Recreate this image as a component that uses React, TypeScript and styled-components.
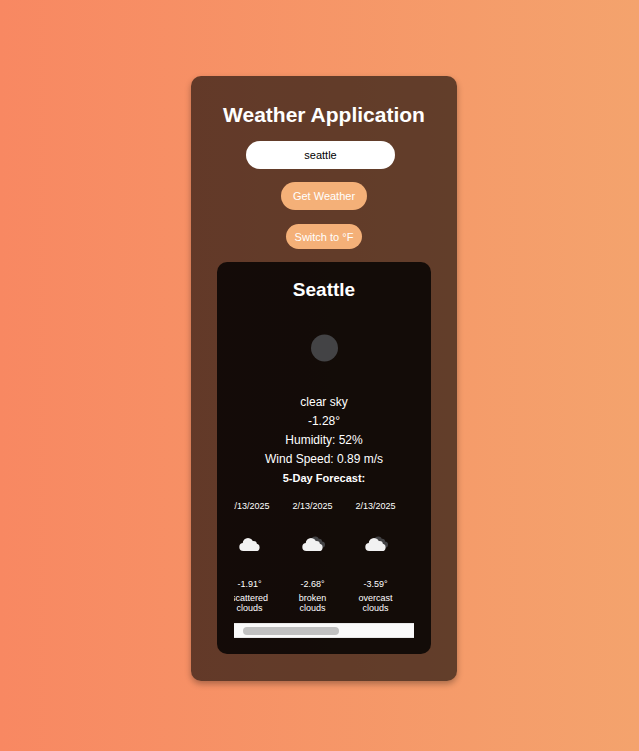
import React, { useLayoutEffect, useRef, useState } from "react";
import styled, { createGlobalStyle } from "styled-components";

const GlobalStyle = createGlobalStyle`
  *, *::before, *::after { box-sizing: border-box; }
  body {
    margin: 0;
    font-family: "Liberation Sans", Arial, sans-serif;
    color: #fff;
    background: linear-gradient(to right, #f88862, #f4a36d);
  }
`;

const Page = styled.main`
  min-height: 100vh;
  display: flex;
  align-items: center;
  justify-content: center;
  padding: 6px 0 0 9px;
`;

const Card = styled.section`
  display: flex;
  flex-direction: column;
  align-items: center;
  width: 100%;
  max-width: 266px;
  padding: 26px 26px 27px;
  border-radius: 10px;
  background: rgba(0, 0, 0, 0.6);
  box-shadow: 0 3px 6px rgba(0, 0, 0, 0.3);
`;

const Title = styled.h1`
  margin: 0 0 13px;
  font-size: 21px;
  line-height: 26px;
  white-space: nowrap;
`;

const SearchForm = styled.form`
  display: flex;
  flex-direction: column;
  align-items: center;
  gap: 13px;
  margin-bottom: 14px;
`;

const CityInput = styled.input`
  width: 149px;
  height: 28px;
  margin-right: 7px;
  padding: 0 13px;
  border: 0;
  border-radius: 14px;
  background: #fff;
  color: #000;
  font: 11px "Liberation Sans", Arial, sans-serif;
  text-align: center;
`;

const PillButton = styled.button<{ $small?: boolean }>`
  height: ${(p) => (p.$small ? 25 : 28)}px;
  padding: 0 ${(p) => (p.$small ? 9 : 12)}px;
  border: 0;
  border-radius: 14px;
  background: #f4b078;
  color: #fff;
  font: 11px "Liberation Sans", Arial, sans-serif;
  cursor: pointer;
`;

const Report = styled.article`
  align-self: stretch;
  margin-top: 13px;
  padding: 17px 17px 16px;
  border-radius: 10px;
  background: rgba(0, 0, 0, 0.8);
  text-align: center;
`;

const City = styled.h2`
  margin: 0;
  font-size: 19px;
  line-height: 22px;
`;

const CurrentIcon = styled.svg`
  display: block;
  width: 86px;
  height: 86px;
  margin: 5px auto 3px;
`;

const Detail = styled.p`
  margin: 0 0 5px;
  font-size: 12px;
  line-height: 14px;
`;

const ForecastTitle = styled.h3`
  margin: 6px 0 16px;
  font-size: 11px;
  line-height: 13px;
`;

const ForecastViewport = styled.div`
  overflow: hidden;
`;

const ForecastList = styled.ul`
  display: flex;
  width: 337px;
  margin: 0;
  padding: 0;
  list-style: none;
`;

const ForecastItem = styled.li`
  width: 63px;
  padding: 0 10px;
  font-size: 9px;
  line-height: 10px;
`;

const DayText = styled.p`
  margin: 0 0 4px;
`;

const DayIcon = styled.svg`
  display: block;
  width: 43px;
  height: 43px;
  margin: 12px 0 13px;
`;

const ScrollTrack = styled.div`
  height: 15px;
  margin-top: 6px;
  padding: 3px 0;
  border: solid #e8e8e8;
  border-width: 1px 0;
  background: #fafafa;
`;

const ScrollThumb = styled.div`
  width: 96px;
  height: 8px;
  margin-left: 9px;
  border-radius: 4px;
  background: #c1c1c1;
`;

function Cloud() {
  return (
    <g fill="#f2f2f2">
      <circle cx="15.3" cy="24" r="4" />
      <circle cx="20" cy="20.3" r="5.3" />
      <circle cx="25.5" cy="21.3" r="3.4" />
      <circle cx="28" cy="24.4" r="3.6" />
      <rect x="15.3" y="20" width="12.7" height="8" />
    </g>
  );
}

function RearCloud() {
  return (
    <g fill="#434345">
      <circle cx="24.2" cy="17.400" r="3.800" />
      <circle cx="28.2" cy="18.600" r="2.900" />
      <circle cx="30.800" cy="21.600" r="3.200" />
      <rect x="23" y="18" width="7.800" height="6.800" />
    </g>
  );
}

const days = [
  { date: "2/13/2025", temp: -1.91, sky: "scattered clouds", layered: false },
  { date: "2/13/2025", temp: -2.68, sky: "broken clouds", layered: true },
  { date: "2/13/2025", temp: -3.59, sky: "overcast clouds", layered: true },
];

export default function App() {
  const [city, setCity] = useState("seattle");
  const viewport = useRef<HTMLDivElement>(null);

  useLayoutEffect(() => {
    if (viewport.current) viewport.current.scrollLeft = 16;
  }, []);

  return (
    <Page>
      <GlobalStyle />
      <Card>
        <Title>Weather Application</Title>
        <SearchForm onSubmit={(e) => e.preventDefault()}>
          <CityInput aria-label="City" value={city} onChange={(e) => setCity(e.target.value)} />
          <PillButton type="submit">Get Weather</PillButton>
        </SearchForm>
        <PillButton type="button" $small>Switch to °F</PillButton>
        <Report>
          <City>Seattle</City>
          <CurrentIcon viewBox="0 0 86 86" aria-hidden="true">
            <circle cx="43.5" cy="42" r="13.5" fill="#434345" />
          </CurrentIcon>
          <Detail>clear sky</Detail>
          <Detail>-1.28°</Detail>
          <Detail>Humidity: 52%</Detail>
          <Detail>Wind Speed: 0.89 m/s</Detail>
          <ForecastTitle>5-Day Forecast:</ForecastTitle>
          <ForecastViewport ref={viewport}>
            <ForecastList>
              {days.map((day) => (
                <ForecastItem key={day.sky}>
                  <DayText>{day.date}</DayText>
                  <DayIcon viewBox="0 0 43 43" aria-hidden="true">
                    {day.layered && <RearCloud />}
                    <Cloud />
                  </DayIcon>
                  <DayText>{day.temp}°</DayText>
                  <DayText>{day.sky}</DayText>
                </ForecastItem>
              ))}
            </ForecastList>
          </ForecastViewport>
          <ScrollTrack>
            <ScrollThumb />
          </ScrollTrack>
        </Report>
      </Card>
    </Page>
  );
}
